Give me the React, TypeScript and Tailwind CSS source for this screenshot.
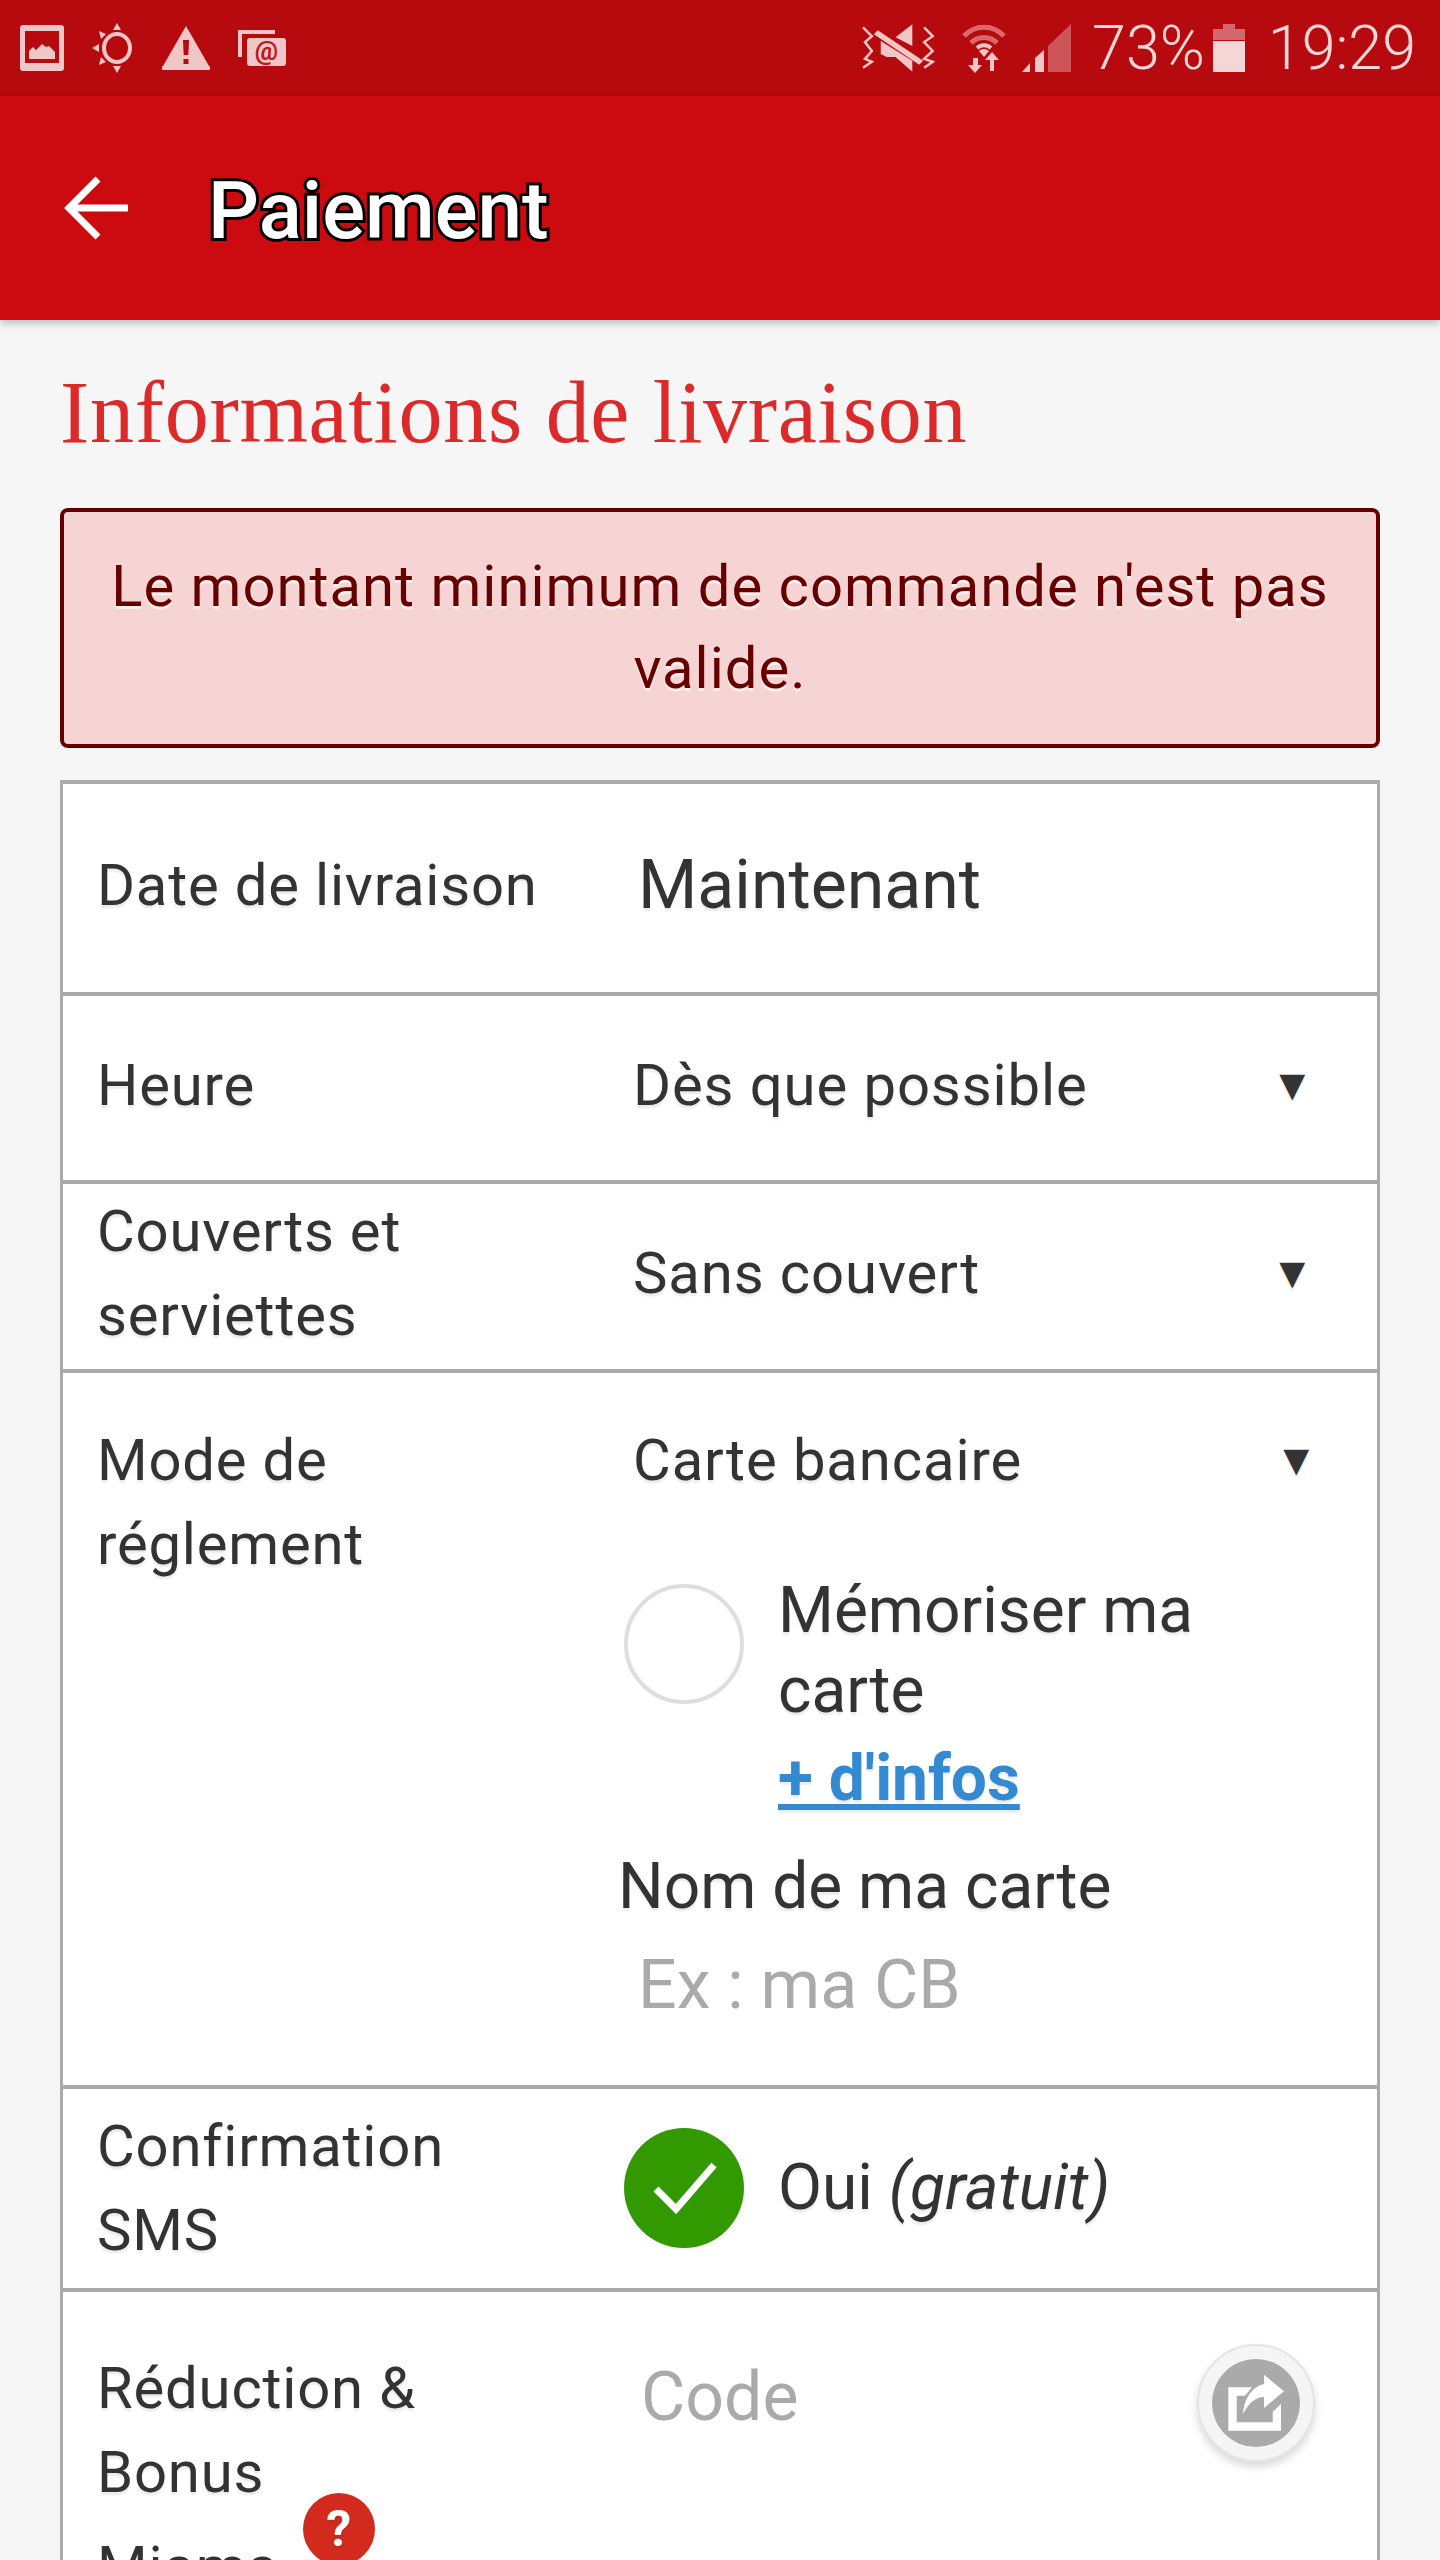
const shadow = "[text-shadow:0_3px_2px_rgba(0,0,0,0.08)]";

function ImageIcon() {
  return (
    <svg viewBox="0 0 44 46" className="w-[44px] h-[46px]" fill="#f0c6c7">
      <path fillRule="evenodd" d="M3 0h38a3 3 0 0 1 3 3v40a3 3 0 0 1-3 3H3a3 3 0 0 1-3-3V3a3 3 0 0 1 3-3zM5 6v32h34V6z" />
      <path d="M9 34V26l4-4 3 3 6-6 4 3 3-1 6 6v7z" />
    </svg>
  );
}

function SunIcon() {
  return (
    <svg viewBox="0 0 42 50" className="w-[42px] h-[50px]" fill="#f0c6c7">
      <ellipse cx="25" cy="25" rx="13" ry="14" fill="none" stroke="#f0c6c7" strokeWidth="4" />
      <path d="M25 0l4 7h-8zM25 50l-4-7h8zM0 25l7-4v8zM7 8l7 3-5 5zM7 42l2-8 5 5z" />
    </svg>
  );
}

function WarnIcon() {
  return (
    <svg viewBox="0 0 48 44" className="w-[48px] h-[44px]">
      <path d="M24 0L47 40a2 2 0 0 1-1 4H2a2 2 0 0 1-1-4z" fill="#f0c6c7" />
      <path d="M21 14h6l-.7 15h-4.6zM21.5 33h5v5h-5z" fill="#b60a0e" />
    </svg>
  );
}

function MailIcon() {
  return (
    <svg viewBox="0 0 48 36" className="w-[48px] h-[36px]">
      <path d="M0 0h37v4H4v23H0z" fill="#f0c6c7" />
      <rect x="9" y="8" width="39" height="28" rx="3" fill="#f0c6c7" />
      <text x="28.5" y="30" textAnchor="middle" fontSize="26" fontWeight="700" fill="#c0151b" fontFamily="Roboto, sans-serif">@</text>
    </svg>
  );
}

function MuteIcon() {
  return (
    <svg viewBox="0 0 74 48" className="w-[73px] h-[48px]" fill="#f0c6c7">
      <path d="M1 3l9 9-7 6 7 9-7 8 7 3-9 6" fill="none" stroke="#f0c6c7" strokeWidth="2.5" />
      <path d="M63 3l8.6 9-8.6 6 8.6 9-8.6 8 8.6 3-8.6 6" fill="none" stroke="#f0c6c7" strokeWidth="2.5" />
      <path d="M51 0V22L34 13Z" />
      <path d="M19 17L51 37V48L34 33H25L19 30Z" />
      <path d="M16 6L62 37 58 41 12 10Z" />
    </svg>
  );
}

function WifiIcon() {
  return (
    <svg viewBox="0 0 44 49" className="w-[44px] h-[49px]">
      <path d="M2 12a27 27 0 0 1 40 0" fill="none" stroke="#d9686b" strokeWidth="5" />
      <path d="M9 19a18 18 0 0 1 26 0" fill="none" stroke="#d9686b" strokeWidth="5" />
      <path d="M15 24a10 10 0 0 1 14 0" fill="none" stroke="#f0c6c7" strokeWidth="4" />
      <path d="M22 33l-5-6a7 7 0 0 1 10 0z" fill="#f0c6c7" />
      <path d="M11 34h5v7h4l-7 8-7-8h5zM28 47v-11h-5l7-8 7 8h-5v11z" fill="#f0c6c7" />
    </svg>
  );
}

function SignalIcon() {
  return (
    <svg viewBox="0 0 49 48" className="w-[49px] h-[48px]">
      <path d="M0 48l8-9v9z" fill="#f0c6c7" />
      <path d="M13 48V34l9-8v22z" fill="#f0c6c7" />
      <path d="M26 48V22L49 0v48z" fill="#cd5558" />
    </svg>
  );
}

function BatteryIcon() {
  return (
    <svg viewBox="0 0 32 48" className="w-[32px] h-[48px]">
      <path d="M10 0h12v5h10v11H0V5h10z" fill="#d2686b" />
      <path d="M0 17h32v31H0z" fill="#f4d6d7" />
    </svg>
  );
}

const leftCol =
  "w-[570px] pl-[34px] pr-[85px] shrink-0 text-[58px] leading-[84px] tracking-[0.8px] text-[#333333]";

function Row({
  left,
  right,
  h,
  pb = "",
}: {
  left: React.ReactNode;
  right: React.ReactNode;
  h: string;
  pb?: string;
}) {
  return (
    <div className={`flex items-center ${h} ${pb} border-b-[4px] border-[#aaaaaa]`}>
      <div className={leftCol}>{left}</div>
      <div className="flex-1 min-w-0">{right}</div>
    </div>
  );
}

function Select({ label, pad = "" }: { label: string; pad?: string }) {
  return (
    <div className={`flex items-center justify-between text-[58px] leading-[84px] tracking-[0.9px] text-[#333333] ${shadow} ${pad}`}>
      <span>{label}</span>
      <span className="text-[44px] leading-none">▼</span>
    </div>
  );
}

export default function App() {
  return (
    <div className="w-[1440px] h-[2560px] overflow-hidden bg-[#f6f6f6] font-['Roboto',sans-serif]">
      <div className="h-[96px] bg-[#b60a0e] flex items-center justify-between pl-[20px] pr-[24px] text-[#f4d6d7]">
        <div className="flex items-center gap-[28px]">
          <ImageIcon />
          <SunIcon />
          <WarnIcon />
          <MailIcon />
        </div>
        <div className="flex items-center">
          <MuteIcon />
          <div className="ml-[27px]"><WifiIcon /></div>
          <div className="ml-[16px]"><SignalIcon /></div>
          <span className="ml-[21px] text-[61px] font-light leading-none">73%</span>
          <div className="ml-[8px]"><BatteryIcon /></div>
          <span className="ml-[23px] text-[61px] font-light leading-none">19:29</span>
        </div>
      </div>
      <header className="h-[224px] bg-[#cb0b10] flex items-center pl-[64px] shadow-[0_3px_8px_rgba(0,0,0,0.25)] relative">
        <svg viewBox="0 0 64 64" className="w-[64px] h-[64px]" fill="none" stroke="#ffffff" strokeWidth="7">
          <path d="M64 32H4" />
          <path d="M34 3L5 32l29 29" />
        </svg>
        <h1 className="ml-[80px] mt-[6px] text-[80px] font-medium leading-none text-white [-webkit-text-stroke:6px_#000000] [paint-order:stroke_fill]">
          Paiement
        </h1>
      </header>
      <main className="px-[60px]">
        <h2 className="mt-[43px] text-[88px] leading-[100px] tracking-[0.7px] text-[#dc2a2a] font-['Liberation_Serif',serif]">
          Informations de livraison
        </h2>
        <div className="mt-[45px] h-[240px] pb-[2px] rounded-[8px] border-[4px] border-[#660000] bg-[#f6d4d4] flex items-center justify-center text-center text-[58px] leading-[82px] tracking-[1px] text-[#660000] px-[40px] [text-shadow:0_3px_0_rgba(255,255,255,0.6)]">
          Le montant minimum de commande n'est pas valide.
        </div>
        <div className="mt-[32px] border-x-[3px] border-t-[4px] border-[#aaaaaa] bg-white">
          <Row
            h="h-[212px]"
            pb="pb-[7px]"
            left={<span className={shadow}>Date de livraison</span>}
            right={<div className={`pl-[5px] text-[68px] leading-none text-[#333333] ${shadow}`}>Maintenant</div>}
          />
          <Row
            h="h-[188px]"
            pb="pb-[7px]"
            left={<span className={shadow}>Heure</span>}
            right={<Select label="Dès que possible" pad="pr-[62px]" />}
          />
          <Row
            h="h-[189px]"
            pb="pb-[7px]"
            left={<span className={shadow}>Couverts et serviettes</span>}
            right={<Select label="Sans couvert" pad="pr-[62px]" />}
          />
          <div className="flex h-[716px] border-b-[4px] border-[#aaaaaa]">
            <div className={`${leftCol} pt-[45px] ${shadow}`}>Mode de réglement</div>
            <div className="flex-1 min-w-0 pt-[45px]">
              <Select label="Carte bancaire" pad="pr-[58px]" />
              <div className="flex mt-[69px] -ml-[9px]">
                <div className="w-[120px] h-[120px] mt-[13px] rounded-full border-[4px] border-[#dedede] shrink-0" />
                <div className="ml-[34px] w-[480px]">
                  <div className={`text-[64px] leading-[80px] text-[#333333] ${shadow}`}>Mémoriser ma carte</div>
                  <a className={`block mt-[8px] text-[64px] leading-[80px] font-bold underline text-[#348ad0] ${shadow}`}>+ d'infos</a>
                </div>
              </div>
              <div className={`mt-[26px] -ml-[15px] text-[64px] leading-[84px] text-[#333333] ${shadow}`}>Nom de ma carte</div>
              <div className="mt-[14px] pl-[5px] text-[68px] leading-[84px] text-[#aaaaaa]">Ex : ma CB</div>
            </div>
          </div>
          <Row
            h="h-[203px]"
            pb="pb-[2px]"
            left={<span className={shadow}>Confirmation SMS</span>}
            right={
              <div className="flex items-center -ml-[9px]">
                <div className="w-[120px] h-[120px] rounded-full bg-[#339900] flex items-center justify-center shrink-0">
                  <svg viewBox="0 0 68 54" className="w-[68px] h-[54px]" fill="none" stroke="#ffffff" strokeWidth="7">
                    <path d="M6 28l20 20L64 4" />
                  </svg>
                </div>
                <span className={`ml-[34px] text-[64px] leading-none text-[#333333] ${shadow}`}>
                  Oui <i>(gratuit)</i>
                </span>
              </div>
            }
          />
          <div className="flex h-[400px]">
            <div className={`${leftCol} pt-[54px] ${shadow}`}>
              Réduction & Bonus
              <div className="flex items-start">
                <span className="mt-[11px]">Miams</span>
                <span className="ml-[25px] -mt-[21px] w-[72px] h-[72px] rounded-full bg-[#d32a1e] text-white flex items-center justify-center text-[50px] font-bold leading-none">?</span>
              </div>
            </div>
            <div className="flex-1 min-w-0 flex items-start justify-between pt-[52px] pr-[62px]">
              <span className="pl-[8px] pt-[11px] text-[68px] leading-[84px] text-[#aaaaaa]">Code</span>
              <div className="w-[118px] h-[118px] rounded-full bg-[#f5f5f5] border-[2px] border-[#e4e4e4] flex items-center justify-center shadow-[0_5px_8px_rgba(0,0,0,0.15)]">
                <div className="w-[88px] h-[88px] rounded-full bg-[#aaaaaa]">
                  <svg viewBox="0 0 88 88" className="w-[88px] h-[88px]" fill="#ffffff">
                    <path d="M16.3 28.3H40L33 36.7H24.7V63.3H60.7V53L69 45V71.7H16.3Z" />
                    <path d="M52 15.7L72 32.3 52 49V38C43 38 36 45 31 55 32 41 39 28 52 25Z" />
                  </svg>
                </div>
              </div>
            </div>
          </div>
        </div>
      </main>
    </div>
  );
}
